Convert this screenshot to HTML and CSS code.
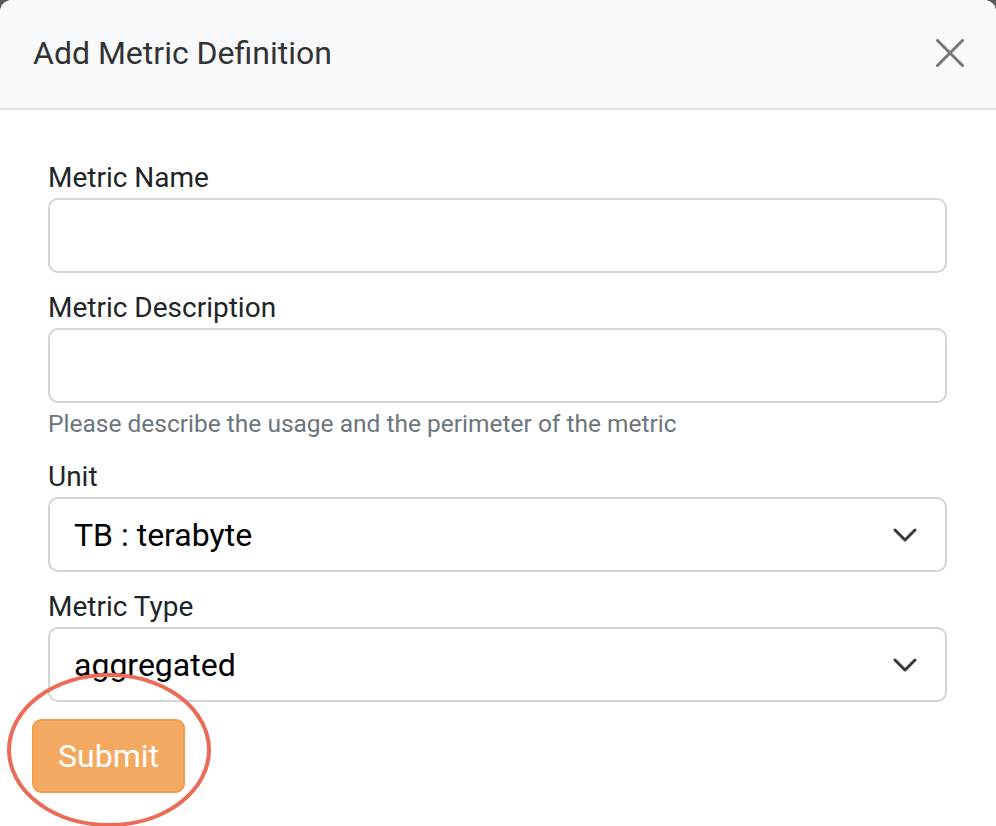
FILE: index.html
```html
<!DOCTYPE html>
<html lang="en">
<head>
<meta charset="utf-8">
<title>Add Metric Definition</title>
<link rel="stylesheet" href="styles.css">
</head>
<body>
<div class="modal">
  <div class="modal-header">
    <h5 class="modal-title">Add Metric Definition</h5>
    <button class="close" type="button" aria-label="Close">
      <svg width="28" height="28" viewBox="0 0 28 28"><path d="M1.5 1.5 L26.5 26.5 M26.5 1.5 L1.5 26.5" stroke="#777" stroke-width="3" stroke-linecap="round" fill="none"/></svg>
    </button>
  </div>
  <div class="modal-body">
    <div class="field">
      <label class="label">Metric Name</label>
      <div class="control"></div>
    </div>
    <div class="field field-help">
      <label class="label">Metric Description</label>
      <div class="control"></div>
      <div class="help">Please describe the usage and the perimeter of the metric</div>
    </div>
    <div class="field">
      <label class="label">Unit</label>
      <div class="control select">
        <span class="value">TB : terabyte</span>
        <svg class="chev" width="24" height="14" viewBox="0 0 24 14"><path d="M2 2 L12 12 L22 2" stroke="#343a40" stroke-width="3" fill="none" stroke-linecap="round" stroke-linejoin="round"/></svg>
      </div>
    </div>
    <div class="field field-last">
      <label class="label">Metric Type</label>
      <div class="control select">
        <span class="value">aggregated</span>
        <svg class="chev" width="24" height="14" viewBox="0 0 24 14"><path d="M2 2 L12 12 L22 2" stroke="#343a40" stroke-width="3" fill="none" stroke-linecap="round" stroke-linejoin="round"/></svg>
      </div>
    </div>
    <div class="actions">
      <button class="btn" type="button">Submit</button>
    </div>
  </div>
  <svg class="annot" width="220" height="170" viewBox="0 0 220 170"><ellipse cx="109" cy="80" rx="100" ry="75" stroke="#ec6b57" stroke-width="4" fill="none"/></svg>
</div>
</body>
</html>
```
FILE: styles.css
```css
html, body {
  margin: 0;
  padding: 0;
  height: 100%;
  overflow: hidden;
}
body {
  background: #5a5a5a;
  font-family: Roboto, "Liberation Sans", sans-serif;
}
.modal {
  position: relative;
  background: #fff;
  border-radius: 12px;
  height: 860px;
  overflow: hidden;
}
.modal-header {
  height: 108px;
  background: #f8f9fa;
  border-bottom: 2px solid #dee2e6;
  display: flex;
  align-items: center;
  justify-content: space-between;
  padding: 0 32px 0 33px;
}
.modal-title {
  margin: 0;
  font-size: 32px;
  font-weight: 400;
  color: #333;
  line-height: 1;
  padding-bottom: 2px;
}
.close {
  border: 0;
  background: none;
  padding: 0;
  width: 28px;
  height: 28px;
  display: block;
  margin-top: -2px;
}
.close svg { display: block; }
.modal-body {
  padding: 51px 33px 0 32px;
}
.field {
  padding: 0 16px;
  margin-bottom: 18px;
}
.field-help { margin-bottom: 20px; }
.field-last { margin-bottom: 17px; }
.label {
  display: block;
  font-size: 28px;
  line-height: 34px;
  color: #212529;
  margin-bottom: 3px;
}
.control {
  box-sizing: border-box;
  height: 75px;
  border: 2px solid #ced4da;
  border-radius: 10px;
  background: #fff;
}
.select {
  display: flex;
  align-items: center;
  justify-content: space-between;
  padding: 0 28px 0 24px;
}
.value {
  font-size: 32px;
  color: #000;
  line-height: 1;
}
.chev { display: block; }
.help {
  font-size: 24.5px;
  line-height: 32px;
  color: #6c757d;
  margin-top: 5px;
}
.btn {
  box-sizing: border-box;
  width: 153px;
  height: 74px;
  background: #f4a963;
  border: 2px solid #f09e4c;
  border-radius: 9px;
  color: #fff;
  font-family: Roboto, "Liberation Sans", sans-serif;
  font-size: 32px;
  padding: 0;
}
.annot {
  position: absolute;
  left: 0;
  top: 670px;
}
```
